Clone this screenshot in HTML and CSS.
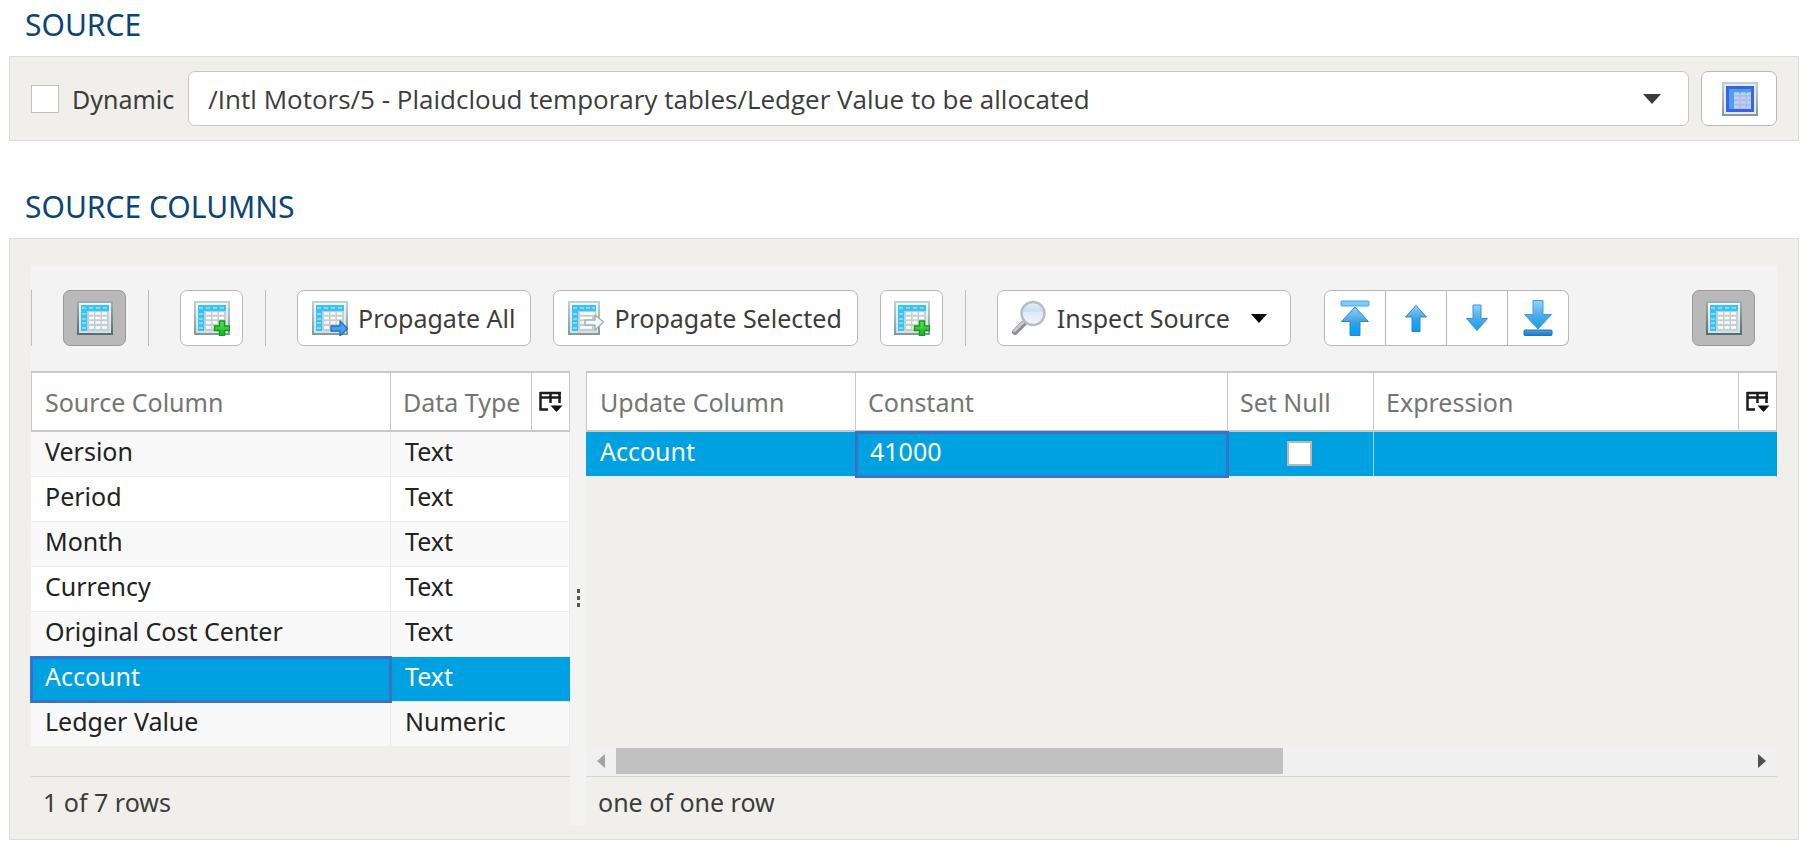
FILE: index.html
```html
<!DOCTYPE html>
<html lang="en">
<head>
<meta charset="utf-8">
<title>Source</title>
<link rel="stylesheet" href="styles.css">
</head>
<body>
<svg class="defs" width="0" height="0" aria-hidden="true">
  <defs>
    <linearGradient id="frame" x1="0" y1="0" x2="0" y2="1"><stop offset="0" stop-color="#c3d1d2"/><stop offset="1" stop-color="#81999b"/></linearGradient>
    <linearGradient id="frameDark" x1="0" y1="0" x2="0" y2="1"><stop offset="0" stop-color="#9eb0b1"/><stop offset="1" stop-color="#536d70"/></linearGradient>
    <linearGradient id="paper" x1="0" y1="0" x2="0" y2="1"><stop offset="0" stop-color="#f0f5f5"/><stop offset="1" stop-color="#d3e0e0"/></linearGradient>
    <linearGradient id="arrow" x1="0" y1="0" x2="0" y2="1"><stop offset="0" stop-color="#8bd3fa"/><stop offset=".55" stop-color="#3f9fe0"/><stop offset=".75" stop-color="#00a8ff"/><stop offset="1" stop-color="#1198ee"/></linearGradient>
    <linearGradient id="arrowDown" x1="0" y1="0" x2="0" y2="1"><stop offset="0" stop-color="#8ed6fa"/><stop offset=".5" stop-color="#4eaee9"/><stop offset="1" stop-color="#149bf0"/></linearGradient>
    <linearGradient id="barDark" x1="0" y1="0" x2="0" y2="1"><stop offset="0" stop-color="#51a5df"/><stop offset="1" stop-color="#1b74bd"/></linearGradient>
    <linearGradient id="green" x1="0" y1="0" x2="0" y2="1"><stop offset="0" stop-color="#5fe05c"/><stop offset="1" stop-color="#12b51c"/></linearGradient>
    <linearGradient id="lens" x1="0" y1="0" x2="0" y2="1"><stop offset="0" stop-color="#e6f1fb"/><stop offset=".4" stop-color="#c9def1"/><stop offset=".45" stop-color="#deebf8"/><stop offset="1" stop-color="#f1f6fc"/></linearGradient>
    <g id="grid">
      <rect x="4" y="4" width="28" height="26" fill="#c3d0d1"/>
      <path d="M4 4h28v6H10v20H4z" fill="#37c2fa"/>
      <path d="M5 7h4M12 7h4M19 7h4M26 7h4M5 13h4M5 18h4M5 22h4M5 27h4" stroke="#7fdcff" stroke-width="2"/>
      <path d="M12 12.500h5M18.500 12.500h5M25 12.500h5M12 17h5M18.500 17h5M25 17h5M12 21.500h5M18.500 21.500h5M25 21.500h5M12 26.500h5M18.500 26.500h5M25 26.500h5" stroke="#fff" stroke-width="2.600"/>
    </g>
    <symbol id="table" viewBox="0 0 36 36">
      <rect x="0" y="1" width="36" height="34" fill="url(#frame)"/>
      <rect x="2" y="3" width="32" height="30" fill="url(#paper)"/>
      <use href="#grid" y="1"/>
    </symbol>
    <symbol id="table-dark" viewBox="0 0 36 36">
      <rect x="0" y="1" width="36" height="34" fill="url(#frameDark)"/>
      <rect x="2" y="3" width="32" height="30" fill="url(#paper)"/>
      <use href="#grid" y="1"/>
    </symbol>
    <symbol id="table-add" viewBox="0 0 36 36">
      <use href="#table"/>
      <path d="M25.500 21h5v5h5v4.500h-5v5h-5v-5h-5V26h5z" fill="url(#green)" stroke="#139a20" stroke-width="1.500" stroke-linejoin="round"/>
    </symbol>
    <symbol id="table-all" viewBox="0 0 36 36">
      <use href="#table"/>
      <path d="M19 26h9v-5l7.500 7.500L28 36v-5h-9z" fill="#4a9ff0" stroke="#1d6fc4" stroke-width="1.300" stroke-linejoin="round"/>
    </symbol>
    <symbol id="table-selected" viewBox="0 0 36 36">
      <rect x="0" y="1" width="32" height="34" fill="url(#frame)"/>
      <rect x="2" y="3" width="28" height="30" fill="url(#paper)"/>
      <rect x="4" y="5" width="24" height="26" fill="#c3d0d1"/>
      <path d="M4 5h24v6H10v20H4z" fill="#37c2fa"/>
      <path d="M5 8h4M12 8h4M18 8h4M24 8h3M5 14h4M5 19h4M5 23h4M5 28h4" stroke="#7fdcff" stroke-width="2"/>
      <path d="M12 13.500h15M12 18h12M12 22.500h10M12 27.500h12" stroke="#fff" stroke-width="2.400"/>
      <path d="M17 20h10v-5l8.500 7L27 30v-5H17z" fill="#f6f8f8" stroke="#a3b2b3" stroke-width="1.500" stroke-linejoin="round"/>
    </symbol>
    <symbol id="table-blue" viewBox="0 0 36 36">
      <rect x="0" y="1" width="36" height="34" fill="url(#frame)"/>
      <rect x="2" y="3" width="32" height="30" fill="#e3ebf1"/>
      <rect x="5.500" y="6.500" width="25" height="23" fill="#a9bfe8" stroke="#3c62e0" stroke-width="3"/>
      <path d="M7 8h22v4H12v16H7z" fill="#4f9ff0"/>
      <path d="M12 12.500h5M18.500 12.500h5M25 12.500h4M12 17h5M18.500 17h5M25 17h4M12 21.500h5M18.500 21.500h5M25 21.500h4M12 26h5M18.500 26h5M25 26h4" stroke="#becff0" stroke-width="2.400"/>
    </symbol>
    <symbol id="search" viewBox="0 0 36 36">
      <path d="M4 32L15 21" stroke="#8d8d94" stroke-width="6" stroke-linecap="round"/>
      <path d="M3.500 31L14 20.500" stroke="#c9c9ce" stroke-width="2.500" stroke-linecap="round"/>
      <circle cx="22" cy="13.500" r="11.500" fill="url(#lens)" stroke="#b9bec4" stroke-width="2.500"/>
    </symbol>
    <symbol id="top" viewBox="0 0 36 36">
      <rect x="4" y="1" width="28" height="5" rx="1" fill="#7ccbf8" stroke="#4ea5de"/>
      <path d="M18 7l13.500 14.500H23V35.500H13V21.500H4.500z" fill="url(#arrow)" stroke="#2f86cc" stroke-linejoin="round"/>
    </symbol>
    <symbol id="up" viewBox="0 0 36 36">
      <path d="M18 5.500L28.500 17H22V31.500h-8V17H7.500z" fill="url(#arrow)" stroke="#2f86cc" stroke-linejoin="round"/>
    </symbol>
    <symbol id="down" viewBox="0 0 36 36">
      <path d="M14 5h8V18.500h6.500L18 30.500 7.500 18.500H14z" fill="url(#arrowDown)" stroke="#3d92d0" stroke-linejoin="round"/>
    </symbol>
    <symbol id="bottom" viewBox="0 0 36 36">
      <path d="M13 .5h10V14.500h8.500L18 29 4.500 14.500H13z" fill="url(#arrowDown)" stroke="#4a9bd4" stroke-linejoin="round"/>
      <rect x="4" y="30" width="28" height="5.500" rx="1" fill="url(#barDark)" stroke="#1b74bd"/>
    </symbol>
    <symbol id="columns" viewBox="0 0 24 22">
      <path d="M1.500 1v17.500H9M1 2h21M1 6.500h21M11.500 1v11M20.500 1v11" fill="none" stroke="#1c1c1c" stroke-width="2.500"/>
      <path d="M11.500 14.500h12l-6 6.500z" fill="#111"/>
    </symbol>
    <symbol id="caret" viewBox="0 0 18 10"><path d="M0 0h18L9 10z" fill="currentColor"/></symbol>
  </defs>
</svg>

<main class="page">
  <h2 class="title">SOURCE</h2>
  <section class="panel source">
    <label class="dynamic"><input type="checkbox" class="box"> Dynamic</label>
    <div class="combo">
      <select class="combo-field" aria-label="Source table">
        <option>/Intl Motors/5 - Plaidcloud temporary tables/Ledger Value to be allocated</option>
      </select>
      <svg class="combo-caret"><use href="#caret"/></svg>
    </div>
    <button class="btn browse" aria-label="Browse table"><svg class="icon"><use href="#table-blue"/></svg></button>
  </section>

  <h2 class="title title-columns">SOURCE COLUMNS</h2>
  <section class="panel columns">
    <div class="toolbar">
      <span class="sep"></span>
      <button class="btn pressed" aria-label="Show source columns"><svg class="icon"><use href="#table-dark"/></svg></button>
      <span class="sep"></span>
      <button class="btn" aria-label="Add source column"><svg class="icon"><use href="#table-add"/></svg></button>
      <span class="sep"></span>
      <button class="btn propagate"><svg class="icon"><use href="#table-all"/></svg>Propagate All</button>
      <button class="btn propagate"><svg class="icon"><use href="#table-selected"/></svg>Propagate Selected</button>
      <button class="btn" aria-label="Add update column"><svg class="icon"><use href="#table-add"/></svg></button>
      <span class="sep"></span>
      <button class="btn"><svg class="icon"><use href="#search"/></svg>Inspect Source<svg class="menu-caret"><use href="#caret"/></svg></button>
      <div class="group">
        <button class="btn" aria-label="Move to top"><svg class="icon"><use href="#top"/></svg></button>
        <button class="btn" aria-label="Move up"><svg class="icon"><use href="#up"/></svg></button>
        <button class="btn" aria-label="Move down"><svg class="icon"><use href="#down"/></svg></button>
        <button class="btn" aria-label="Move to bottom"><svg class="icon"><use href="#bottom"/></svg></button>
      </div>
      <button class="btn pressed last" aria-label="Show update columns"><svg class="icon"><use href="#table-dark"/></svg></button>
    </div>

    <div class="split">
      <div class="pane pane-left">
        <div class="rows">
          <table class="table">
            <colgroup><col class="c-source"><col class="c-type"><col class="c-menu"></colgroup>
            <thead><tr><th>Source Column</th><th>Data Type</th><th class="menu"><button class="menu-btn" aria-label="Choose columns"><svg class="menu-icon"><use href="#columns"/></svg></button></th></tr></thead>
            <tbody>
              <tr><td>Version</td><td colspan="2">Text</td></tr>
              <tr><td>Period</td><td colspan="2">Text</td></tr>
              <tr><td>Month</td><td colspan="2">Text</td></tr>
              <tr><td>Currency</td><td colspan="2">Text</td></tr>
              <tr><td>Original Cost Center</td><td colspan="2">Text</td></tr>
              <tr class="selected"><td class="focus">Account</td><td colspan="2">Text</td></tr>
              <tr><td>Ledger Value</td><td colspan="2">Numeric</td></tr>
            </tbody>
          </table>
        </div>
        <div class="status">1 of 7 rows</div>
      </div>
      <div class="splitter"><svg class="grip" viewBox="0 0 3 18"><path d="M0 0h3v4H0zM0 7h3v4H0zM0 14h3v4H0z" fill="#555"/></svg></div>
      <div class="pane pane-right">
        <div class="rows">
          <table class="table">
            <colgroup><col class="c-update"><col class="c-constant"><col class="c-null"><col><col class="c-menu"></colgroup>
            <thead><tr><th>Update Column</th><th>Constant</th><th>Set Null</th><th>Expression</th><th class="menu"><button class="menu-btn" aria-label="Choose columns"><svg class="menu-icon"><use href="#columns"/></svg></button></th></tr></thead>
            <tbody>
              <tr class="selected"><td>Account</td><td class="focus">41000</td><td class="check"><input type="checkbox" class="box box-inset" aria-label="Set Null"></td><td colspan="2"></td></tr>
            </tbody>
          </table>
        </div>
        <div class="scroll">
          <button class="scroll-btn" aria-label="Scroll left"><svg class="scroll-icon" viewBox="0 0 8 14"><path d="M8 0v14L0 7z" fill="#a3a3a3"/></svg></button>
          <div class="track"><div class="thumb"></div></div>
          <button class="scroll-btn" aria-label="Scroll right"><svg class="scroll-icon" viewBox="0 0 8 14"><path d="M0 0v14l8-7z" fill="#505050"/></svg></button>
        </div>
        <div class="status">one of one row</div>
      </div>
    </div>
  </section>
</main>
</body>
</html>
```
FILE: styles.css
```css
* { box-sizing: border-box; }

body {
  margin: 0;
  background: #fff;
  color: #3c3c3c;
  font: 25px/32px "Noto Sans", "Open Sans", sans-serif;
}

button, select {
  font: inherit;
  color: inherit;
}

.defs { position: absolute; }

.page {
  display: flex;
  flex-direction: column;
  min-height: 100vh;
  padding: 0 9px 6px;
}

.title {
  margin: 0;
  padding: 5px 16px 11px;
  color: #0b4477;
  font-size: 30px;
  font-weight: 400;
  line-height: 40px;
}

.title-columns { padding-top: 46px; }

.panel {
  background: #f0efeb;
  border: 1px solid #dcdcdc;
}

.source {
  display: flex;
  align-items: center;
  gap: 12px;
  padding: 14px 21px;
}

.dynamic {
  display: flex;
  align-items: center;
  gap: 13px;
  padding-right: 2px;
}

.box {
  appearance: none;
  flex: none;
  width: 28px;
  height: 28px;
  margin: 0;
  background: #fff;
  border: 1px solid #c0c0c0;
}

.combo {
  position: relative;
  flex: 1;
}

.combo-field {
  appearance: none;
  display: block;
  width: 100%;
  height: 55px;
  padding: 0 19px;
  background: #fff;
  border: 1px solid #c6c6c6;
  border-radius: 7px;
  font-family: "Open Sans", "Noto Sans", sans-serif;
  font-size: 26px;
}

.combo-caret {
  position: absolute;
  top: 23px;
  right: 28px;
  width: 18px;
  height: 10px;
  pointer-events: none;
}

.btn {
  display: flex;
  align-items: center;
  justify-content: center;
  gap: 10px;
  height: 56px;
  padding: 0 12px 0 13px;
  background: #fff;
  border: 1px solid #b8b8b8;
  border-radius: 7px;
  white-space: nowrap;
}

.propagate { padding: 0 15px 0 14px; }

.browse {
  width: 76px;
  height: 55px;
}

.icon {
  flex: none;
  width: 36px;
  height: 36px;
}

.columns {
  display: flex;
  flex: 1;
  flex-direction: column;
  padding: 26px 21px 14px;
}

.toolbar {
  display: flex;
  align-items: center;
  gap: 22px;
  padding: 25px 22px 25px 0;
  background: #f3f3f3;
}

.sep {
  width: 1px;
  height: 56px;
  margin-right: 9px;
  background: #bdbdbd;
}

.pressed {
  background: #b9b9b9;
  border-color: #999;
}

.last { margin-left: auto; }

.menu-caret {
  width: 16px;
  height: 9px;
  margin: 0 11px;
  color: #000;
}

.group {
  display: flex;
  margin-left: 11px;
}

.group .btn {
  padding: 0 12px;
  border-left-width: 0;
  border-radius: 0;
}

.group .btn:first-child {
  border-left-width: 1px;
  border-radius: 7px 0 0 7px;
}

.group .btn:last-child { border-radius: 0 7px 7px 0; }

.split {
  display: flex;
  flex: 1;
}

.pane {
  display: flex;
  flex-direction: column;
}

.pane-left { flex: 0 0 539px; }

.pane-right {
  flex: 1;
  min-width: 0;
}

.rows {
  flex: 1;
}

.splitter {
  display: flex;
  align-items: center;
  justify-content: center;
  width: 16px;
  background: #f3f3f3;
}

.grip {
  width: 3px;
  height: 18px;
}

.table {
  width: 100%;
  table-layout: fixed;
  border-collapse: separate;
  border-spacing: 0;
}

.c-source { width: 360px; }
.c-type { width: 141px; }
.c-menu { width: 38px; }
.c-update { width: 270px; }
.c-constant { width: 372px; }
.c-null { width: 146px; }

.table th {
  height: 61px;
  padding: 0 0 0 12px;
  background: #fff;
  border: solid #c9c9c9;
  border-width: 2px 1px 2px 0;
  color: #757575;
  font-weight: 400;
  text-align: left;
  white-space: nowrap;
}

.table th:first-child {
  padding-left: 13px;
  border-left-width: 1px;
}

.table th.menu { padding: 0; }

.menu-btn {
  display: flex;
  align-items: center;
  justify-content: center;
  width: 100%;
  height: 56px;
  padding: 0;
  background: none;
  border: 0;
}

.menu-icon {
  width: 24px;
  height: 22px;
}

.table td {
  height: 45px;
  padding: 0 14px 6px;
  border-bottom: 1px solid #ececec;
  border-right: 1px solid #ececec;
  background: #fff;
  color: #222;
}

.table tr:nth-child(odd) td { background: #f9f9f9; }

.table tbody .selected:nth-child(n) td {
  background: #00a1e1;
  border-right-color: #00a1e1;
  color: #fff;
}

.table .selected .focus {
  position: relative;
  outline: 3px solid #3b72c9;
  outline-offset: -2px;
}

.table tbody .selected:nth-child(n) .check {
  padding: 0 2px 1px 0;
  border-right-color: #9bd5f2;
  line-height: 25px;
  text-align: center;
}

.box-inset {
  display: inline-block;
  width: 25px;
  height: 25px;
  border: 2px solid #b9b9b9;
  vertical-align: top;
}

.scroll {
  display: flex;
  height: 28px;
  padding-bottom: 2px;
  background: #f0f0f0;
}

.scroll-btn {
  display: flex;
  align-items: center;
  justify-content: center;
  width: 30px;
  padding: 0;
  background: none;
  border: 0;
}

.scroll-icon {
  width: 8px;
  height: 14px;
}

.track { flex: 1; }

.thumb {
  width: 59%;
  height: 100%;
  background: #c1c1c1;
}

.status {
  padding: 9px 12px 7px;
  border-top: 1px solid #d6d6d6;
}
```
